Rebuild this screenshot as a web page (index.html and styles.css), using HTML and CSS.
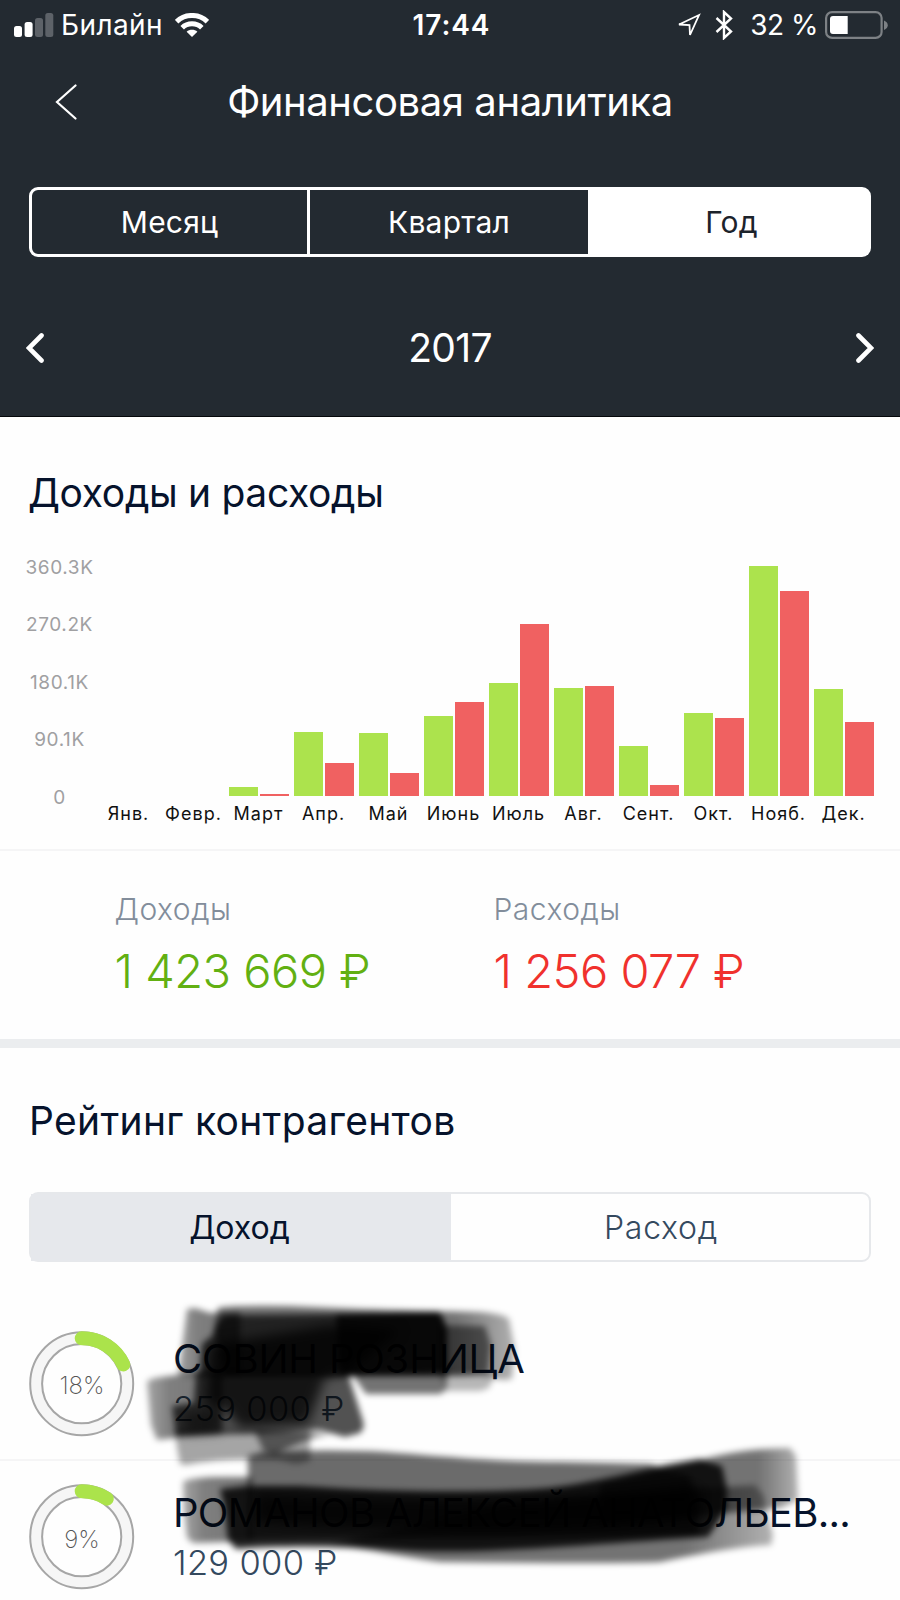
FILE: index.html
```
<!DOCTYPE html>
<html lang="ru">
<head>
<meta charset="utf-8">
<title>Финансовая аналитика</title>
<link rel="stylesheet" href="styles.css">
</head>
<body>
<div class="screen">
  <header class="top">
    <div class="status">
      <div class="status-left">
        <svg class="signal" width="40" height="24" viewBox="0 0 40 24"><g fill="#fff"><rect x="0" y="13" width="8" height="11" rx="2.500"/><rect x="10.600" y="9" width="8" height="15" rx="2.500"/></g><g fill="#5d6268"><rect x="21" y="5" width="8" height="19" rx="2.500"/><rect x="31.300" y="0" width="8" height="24" rx="2.500"/></g></svg>
        <span class="carrier">Билайн</span>
        <svg class="wifi" width="34" height="24" viewBox="0 0 34 24"><g fill="none" stroke="#fff" stroke-width="5"><path d="M1.600 8.600C10 .4 24 .4 32.400 8.600"/><path d="M7.200 14.700C12.500 9.500 21.500 9.500 26.800 14.700"/></g><path d="M11.600 18.800c3-2.600 7.800-2.600 10.800 0L17 24z" fill="#fff"/></svg>
      </div>
      <div class="clock">17:44</div>
      <div class="status-right">
        <svg class="loc" width="24" height="25" viewBox="0 0 24 25"><path d="M2 11.500 22 2 13 22 12.500 12z" fill="none" stroke="#fff" stroke-width="1.800" stroke-linejoin="miter"/></svg>
        <svg class="bt" width="18" height="30" viewBox="0 0 18 30"><path d="M1.500 8 16 21.500 9 28V2l7 6.500L1.500 22" fill="none" stroke="#fff" stroke-width="2.400"/></svg>
        <span class="percent">32 %</span>
        <svg class="battery" width="63" height="28" viewBox="0 0 63 28"><rect x="1.100" y="1.100" width="55.500" height="25.800" rx="6" fill="none" stroke="#7d8185" stroke-width="2.200"/><path d="M8 5h14.700v18H8a3 3 0 0 1-3-3V8a3 3 0 0 1 3-3z" fill="#fff"/><path d="M59 9.500c5 2 5 7.500 0 9.500z" fill="#7d8185"/></svg>
      </div>
    </div>
    <div class="nav">
      <svg class="back" width="22" height="36" viewBox="0 0 22 36"><path d="M20.500 1.500 2 18 20.500 34.500" fill="none" stroke="#fff" stroke-width="2.200" stroke-linecap="round"/></svg>
      <h1 class="nav-title">Финансовая аналитика</h1>
    </div>
    <div class="period">
      <div class="period-item">Месяц</div>
      <div class="period-item">Квартал</div>
      <div class="period-item active">Год</div>
    </div>
    <div class="year">
      <svg width="18" height="30" viewBox="0 0 18 30"><path d="M15.500 2.500 3 15 15.500 27.500" fill="none" stroke="#fff" stroke-width="4.600" stroke-linecap="round"/></svg>
      <span class="year-value">2017</span>
      <svg width="18" height="30" viewBox="0 0 18 30"><path d="M2.500 2.500 15 15 2.500 27.500" fill="none" stroke="#fff" stroke-width="4.600" stroke-linecap="round"/></svg>
    </div>
  </header>

  <section class="flow">
    <h2 class="heading flow-heading">Доходы и расходы</h2>
    <div class="chart">
      <div class="axis"><span>360.3K</span><span>270.2K</span><span>180.1K</span><span>90.1K</span><span>0</span></div>
      <div class="months">
        <div class="month"><div class="bars"></div><span>Янв.</span></div>
        <div class="month"><div class="bars"></div><span>Февр.</span></div>
        <div class="month"><div class="bars"><i class="in" style="height:9.500px"></i><i class="out" style="height:2.500px"></i></div><span>Март</span></div>
        <div class="month"><div class="bars"><i class="in" style="height:64.500px"></i><i class="out" style="height:33.500px"></i></div><span>Апр.</span></div>
        <div class="month"><div class="bars"><i class="in" style="height:63.500px"></i><i class="out" style="height:23px"></i></div><span>Май</span></div>
        <div class="month"><div class="bars"><i class="in" style="height:80px"></i><i class="out" style="height:94px"></i></div><span>Июнь</span></div>
        <div class="month"><div class="bars"><i class="in" style="height:113.500px"></i><i class="out" style="height:172px"></i></div><span>Июль</span></div>
        <div class="month"><div class="bars"><i class="in" style="height:108.500px"></i><i class="out" style="height:110px"></i></div><span>Авг.</span></div>
        <div class="month"><div class="bars"><i class="in" style="height:50.500px"></i><i class="out" style="height:11px"></i></div><span>Сент.</span></div>
        <div class="month"><div class="bars"><i class="in" style="height:83px"></i><i class="out" style="height:78px"></i></div><span>Окт.</span></div>
        <div class="month"><div class="bars"><i class="in" style="height:230.500px"></i><i class="out" style="height:205.500px"></i></div><span>Нояб.</span></div>
        <div class="month"><div class="bars"><i class="in" style="height:107px"></i><i class="out" style="height:74.500px"></i></div><span>Дек.</span></div>
      </div>
    </div>
  </section>

  <section class="totals">
    <div class="total"><div class="total-label">Доходы</div><div class="total-sum income">1 423 669 ₽</div></div>
    <div class="total"><div class="total-label">Расходы</div><div class="total-sum expense">1 256 077 ₽</div></div>
  </section>

  <section class="rating">
    <h2 class="heading rating-heading">Рейтинг контрагентов</h2>
    <div class="kind">
      <div class="kind-item active">Доход</div>
      <div class="kind-item">Расход</div>
    </div>
    <div class="row">
      <div class="ring">
        <svg width="106" height="106" viewBox="0 0 106 106"><circle cx="53" cy="53" r="46" fill="none" stroke="#f6f6f6" stroke-width="12"/><circle cx="52.700" cy="52.700" r="51.500" fill="none" stroke="#a6a6a6" stroke-width="2"/><circle cx="52.700" cy="52.700" r="39.600" fill="none" stroke="#a6a6a6" stroke-width="2"/><path d="M52.700 7.300A45.500 45.500 0 0 1 94.300 33.500" fill="none" stroke="#abe34b" stroke-width="14" stroke-linecap="round"/></svg>
        <span class="ring-value">18%</span>
      </div>
      <div class="who"><div class="name">СОВИН РОЗНИЦА</div><div class="amount">259 000 ₽</div></div>
    </div>
    <div class="row">
      <div class="ring">
        <svg width="106" height="106" viewBox="0 0 106 106"><circle cx="53" cy="53" r="46" fill="none" stroke="#f6f6f6" stroke-width="12"/><circle cx="52.700" cy="52.700" r="51.500" fill="none" stroke="#a6a6a6" stroke-width="2"/><circle cx="52.700" cy="52.700" r="39.600" fill="none" stroke="#a6a6a6" stroke-width="2"/><path d="M52.700 7.300A45.500 45.500 0 0 1 77.800 14.700" fill="none" stroke="#abe34b" stroke-width="14" stroke-linecap="round"/></svg>
        <span class="ring-value">9%</span>
      </div>
      <div class="who"><div class="name name-long">РОМАНОВ АЛЕКСЕЙ АНАТОЛЬЕВ...</div><div class="amount">129 000 ₽</div></div>
    </div>
    <!-- translucent marker strokes over the list -->
    <svg class="marker" width="900" height="300" viewBox="0 1300 900 300">
      <defs>
        <filter id="soft" x="-10%" y="-20%" width="120%" height="140%"><feGaussianBlur stdDeviation="3"/></filter>
        <filter id="softer" x="-10%" y="-20%" width="120%" height="140%"><feGaussianBlur stdDeviation="6"/></filter>
        <linearGradient id="fade-right" x1="0" x2="1" y1="0" y2="0"><stop offset="0" stop-opacity=".55"/><stop offset=".8" stop-opacity=".55"/><stop offset="1" stop-opacity=".3"/></linearGradient>
        <linearGradient id="fade-left" x1="0" x2="1" y1="0" y2="0"><stop offset="0" stop-opacity=".35"/><stop offset=".3" stop-opacity=".5"/><stop offset="1" stop-opacity=".55"/></linearGradient>
      </defs>
      <g filter="url(#soft)">
        <path fill="url(#fade-left)" d="M187 1309 195 1308 210 1313 240 1312 240 1376 178 1376z"/>
        <path fill="url(#fade-right)" d="M218 1308Q228 1305 290 1306C350 1309 430 1311 480 1312Q505 1314 509 1319L515 1350 512 1379 504 1380 480 1376 225 1376 214 1330z"/>
        <path opacity=".7" d="M225 1315 330 1314 440 1312 447 1330 447 1376 225 1376 200 1374 202 1344 212 1336 216 1325z"/>
        <path opacity=".5" d="M440 1325 485 1326 491 1345 488 1374 440 1376z"/>
        <path opacity=".75" d="M336 1314 436 1312Q446 1315 447 1335V1372L340 1376z"/>
        <path opacity=".55" d="M352 1374 447 1373 446 1390 440 1394 366 1394z"/>
        <path opacity=".28" d="M440 1374 494 1376 489 1388 480 1391 446 1391z"/>
        <path fill="url(#fade-left)" d="M147 1382Q148 1378 170 1376L200 1372 222 1376 222 1432 157 1440 151 1425z"/>
        <path opacity=".68" d="M196 1372 348 1374 362 1418Q366 1428 360 1433L345 1437 320 1430 262 1433 176 1436 172 1406 194 1403z"/>
        <path opacity=".35" d="M174 1430 310 1430 310 1461 296 1464 278 1460Q220 1458 186 1465L180 1464z"/>
        <path opacity=".5" d="M254 1430 330 1434Q305 1438 275 1455L264 1452z"/>
      </g>
      <g filter="url(#softer)">
        <path opacity=".75" d="M210 1345 330 1325 400 1330 345 1374 325 1378 308 1424 240 1428 225 1408 206 1404z"/>
        <path opacity=".45" d="M184 1412 222 1410 220 1432 186 1434z"/>
      </g>
      <g filter="url(#soft)">
        <path fill="url(#fade-left)" d="M183 1482Q186 1478 215 1477L252 1477V1541L193 1543 187 1538 184 1510z"/>
        <path opacity=".58" d="M248 1456 262 1452Q330 1449 385 1452C450 1457 500 1462 560 1462L650 1464 690 1476 700 1535 248 1540z"/>
        <path opacity=".84" d="M220 1489 246 1486 300 1486C400 1493 500 1493 550 1488C610 1480 650 1466 700 1459L722 1466 727 1490 726 1510 708 1537C600 1543 480 1556 400 1550C340 1546 280 1546 236 1549L228 1540 224 1505z"/>
        <path fill="url(#fade-right)" d="M600 1485 692 1463Q730 1449 790 1448L796 1456 798 1500 780 1508 600 1525z"/>
        <path fill="url(#fade-right)" d="M500 1505 680 1490 755 1485 764 1496 766 1510 773 1535 771 1545C730 1547 690 1556 660 1562Q620 1564 440 1562C400 1557 370 1549 330 1545z"/>
      </g>
      <g filter="url(#softer)">
        <path opacity=".7" d="M256 1494C400 1500 520 1504 690 1484L704 1492 700 1518C600 1535 400 1534 256 1522z"/>
      </g>
    </svg>
  </section>
</div>
</body>
</html>
```
FILE: styles.css
```
* { box-sizing: border-box; }
body { margin: 0; background: #fff; font-family: Inter, "Liberation Sans", sans-serif; }
.screen { width: 900px; height: 1600px; overflow: hidden; background: #fefefe; }
.top { height: 417px; background: #232a31; color: #fff; border-bottom: 1px solid #05080b; }
.status { display: grid; grid-template-columns: 1fr auto 1fr; align-items: center; height: 50px; padding: 0 12px 0 14px; font-size: 28px; line-height: 50px; }
.status-left, .status-right { display: flex; align-items: center; }
.status-right { justify-content: flex-end; }
.carrier { margin-left: 7px; letter-spacing: .4px; }
.wifi { margin-left: 12px; }
.clock { margin-left: 1px; font-weight: 600; letter-spacing: .9px; }
.loc { margin-right: -1px; }
.bt { margin-left: 15px; }
.percent { margin: 0 7px 0 17px; letter-spacing: -.5px; }
.nav { display: grid; grid-template-columns: 100px 1fr 100px; align-items: center; height: 103px; }
.back { margin-left: 54.500px; }
.nav-title { margin: 0; text-align: center; font-size: 40px; font-weight: 400; line-height: 103px; letter-spacing: -.42px; }
.period { display: grid; grid-template-columns: 275px 281px 1fr; height: 70px; margin: 34px 29px 0 29px; border: 3px solid #fff; border-radius: 9px; font-size: 30px; line-height: 65px; text-align: center; letter-spacing: .2px; }
.period-item + .period-item { border-left: 3px solid #fff; }
.period .active { padding-left: 4px; background: #fff; color: #1c232b; }
.year { display: flex; justify-content: space-between; align-items: center; height: 60px; margin: 61px 26px 0; font-size: 39px; line-height: 60px; }
.year-value { letter-spacing: -.7px; }
.heading { margin: 0; font-size: 39px; font-weight: 400; line-height: 50px; color: #06132c; white-space: nowrap; }
.flow { height: 432px; padding: 51px 25px 0 29px; }
.flow-heading { margin-left: -1px; letter-spacing: -.34px; }
.rating-heading { letter-spacing: .32px; }
.chart { display: grid; grid-template-columns: 61px 1fr; column-gap: 9px; margin-top: 37px; }
.axis { display: flex; flex-direction: column; align-items: center; margin-top: -16.500px; font-size: 19px; line-height: 57.6px; color: #a0a0a2; letter-spacing: .6px; }
.months { display: grid; grid-template-columns: repeat(12, 60px); column-gap: 5px; margin-top: 9.500px; }
.month { display: flex; flex-direction: column; align-items: center; font-size: 18px; line-height: 36px; color: #111; letter-spacing: 1px; white-space: nowrap; }
.month span { margin-right: 1px; }
.bars { display: grid; grid-template-columns: 29.3px 29.3px; column-gap: 1.3px; align-items: end; width: 60px; height: 231.500px; }
.in { background: #ace34d; }
.out { background: #f06161; }
.totals { display: grid; grid-template-columns: 379px 1fr; height: 199px; padding: 38px 0 0 114.500px; border-top: 2px solid #f5f5f6; border-bottom: 9px solid #ebedef; }
.total { white-space: nowrap; }
.total-label { font-size: 30px; font-weight: 300; line-height: 40px; color: #828d9b; letter-spacing: .5px; }
.total-sum { margin-top: 12px; font-size: 47px; font-weight: 300; line-height: 60px; letter-spacing: -.5px; }
.income { color: #62b012; }
.expense { color: #f0312d; }
.rating { position: relative; height: 552px; padding: 48px 29px 0; }
.kind { display: grid; grid-template-columns: 420px 1fr; height: 70px; margin-top: 46px; border: 2px solid #e6e8eb; border-radius: 9px; font-size: 32px; line-height: 67px; text-align: center; }
.kind-item { padding-left: 2px; color: #34495e; font-weight: 300; letter-spacing: .7px; }
.kind .active { padding: 0 3px 0 0; background: #e6e8ec; color: #06132c; font-weight: 400; letter-spacing: 0; }
.row { display: grid; grid-template-columns: 106px 1fr; column-gap: 38px; height: 153.500px; margin: 0 -29px; padding: 23px 0 0 29px; border-bottom: 2px solid #f5f5f6; }
.kind + .row { margin-top: 45.500px; }
.ring { display: grid; place-items: center; width: 106px; height: 106px; }
.ring svg, .ring-value { grid-area: 1 / 1; }
.ring-value { padding-top: 4px; font-size: 24px; font-weight: 200; color: #555; }
.who { padding-top: 3.500px; white-space: nowrap; }
.name { font-size: 40px; line-height: 50px; color: #06132c; letter-spacing: -.2px; }
.name-long { letter-spacing: -.7px; }
.amount { font-size: 34.500px; font-weight: 300; line-height: 50px; color: #34495e; letter-spacing: .3px; }
.marker { position: absolute; left: 0; bottom: 0; pointer-events: none; }
```
